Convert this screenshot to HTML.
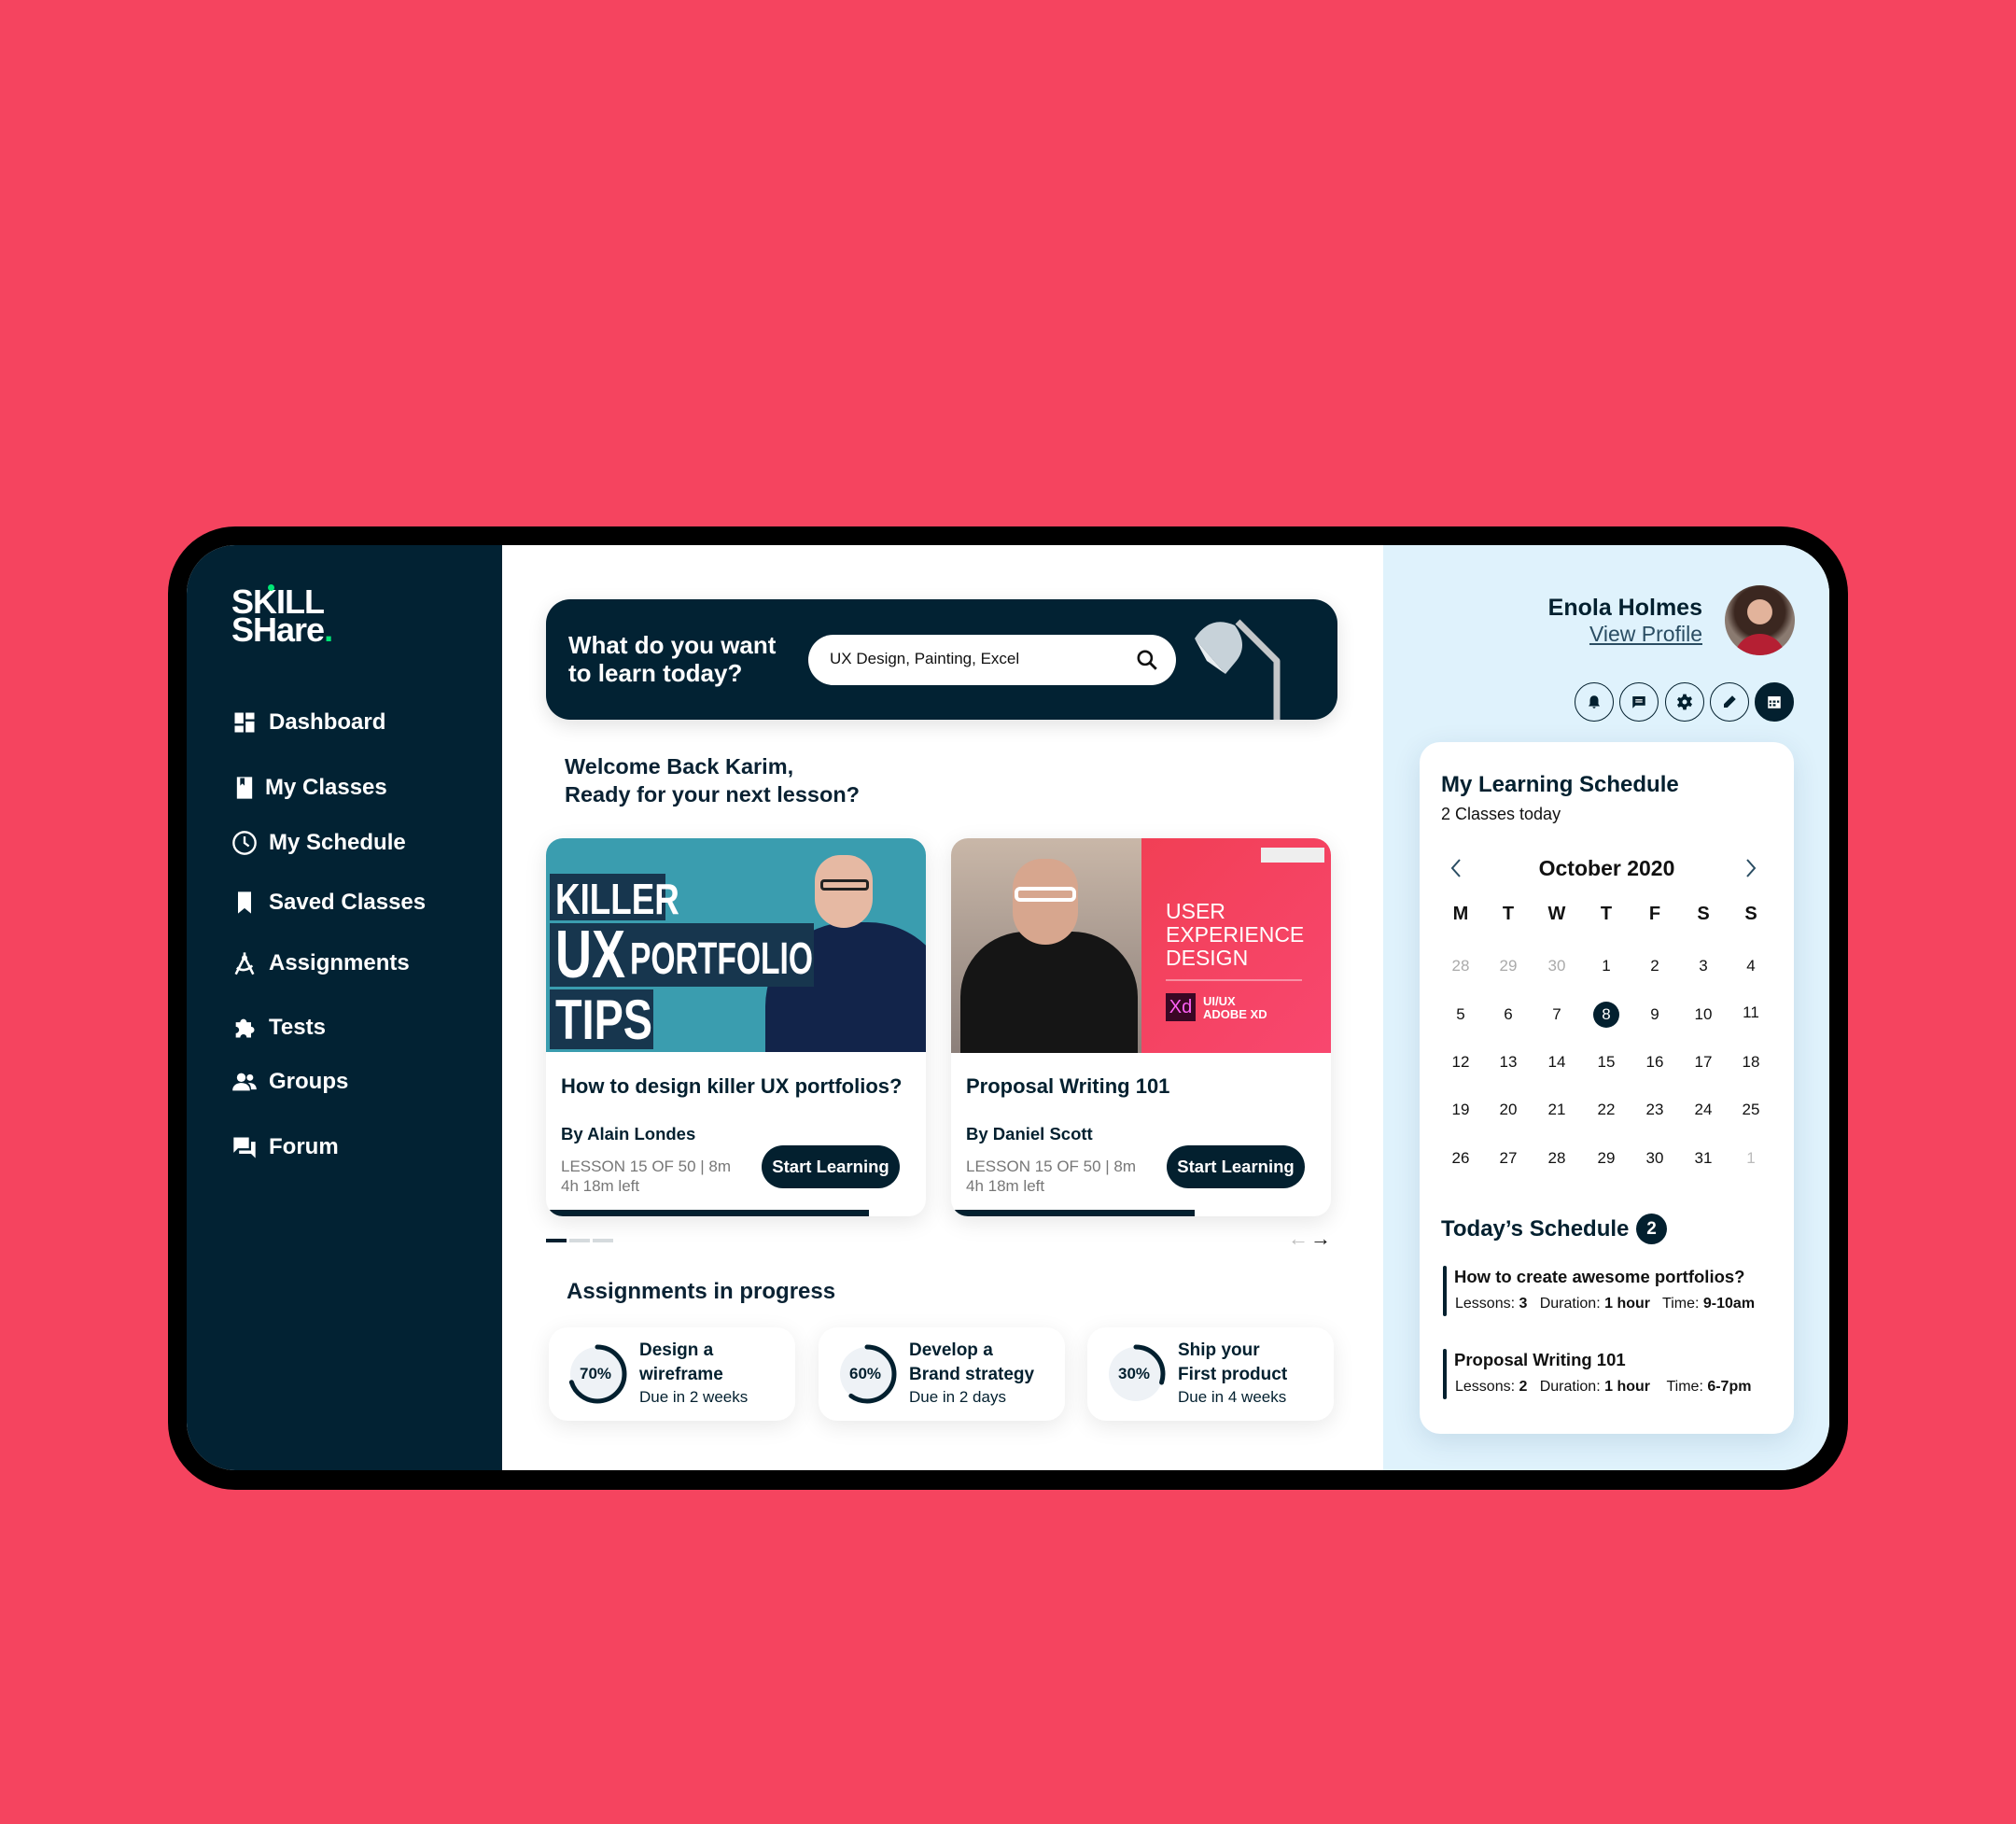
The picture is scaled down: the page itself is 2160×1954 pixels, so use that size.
<!DOCTYPE html>
<html><head><meta charset="utf-8">
<style>
*{margin:0;padding:0;box-sizing:border-box}
body{width:2160px;height:1954px;background:#F5445F;position:relative;overflow:hidden;font-family:"Liberation Sans",Arial,sans-serif;color:#03202F}
.a{position:absolute}
.frame{left:180px;top:564px;width:1800px;height:1032px;background:#000;border-radius:72px}
.screen{left:200px;top:584px;width:1760px;height:991px;border-radius:52px;overflow:hidden;background:#fff}
.side{left:0;top:0;width:338px;height:991px;background:#022233}
.right{left:1282px;top:0;width:478px;height:991px;background:#DFF2FC}
.nav{position:absolute;left:48px;color:#fff;font-size:24px;font-weight:bold;display:flex;align-items:center;gap:12px;white-space:nowrap}
.nav svg{width:28px;height:28px}
.t{position:absolute;white-space:nowrap}
.card{position:absolute;top:314px;width:407px;height:405px;background:#fff;border-radius:18px;overflow:hidden;box-shadow:0 6px 24px rgba(0,0,0,.10)}
.btn{position:absolute;left:231px;top:329px;width:148px;height:46px;border-radius:23px;background:#03202F;color:#fff;font-weight:bold;font-size:18.5px;line-height:46px;text-align:center}
.asg{position:absolute;top:838px;width:264px;height:100px;background:#fff;border-radius:20px;box-shadow:0 6px 24px rgba(0,0,0,.09)}
.ib{position:absolute;top:147px;width:42px;height:42px;border-radius:50%;border:1.5px solid #03202F;display:flex;align-items:center;justify-content:center}
.cal{position:absolute;width:40px;text-align:center;font-size:17px;transform:translateX(-20px)}
</style></head><body>
<div class="a frame"></div>
<div class="a screen">
  <div class="a side">
    <div class="t" style="left:48px;top:46px;color:#fff;font-size:36px;font-weight:900;line-height:30px;letter-spacing:-1px">SKILL<br>SHare<span style="color:#00E676">.</span></div>
    <div class="a" style="left:87px;top:42px;width:7px;height:7px;border-radius:50%;background:#00E676"></div>
    <div class="nav" style="top:176px"><svg viewBox="0 0 24 24"><path fill="#fff" d="M3 3h8v10H3zM13 3h8v6h-8zM13 11h8v10h-8zM3 15h8v6H3z"/></svg>Dashboard</div>
    <div class="nav" style="top:246px;gap:8px"><svg viewBox="0 0 24 24"><path fill="#fff" d="M5 2h14v20H5z"/><path fill="#022233" d="M8 3h4v7l-2-2-2 2z"/></svg>My Classes</div>
    <div class="nav" style="top:305px"><svg viewBox="0 0 24 24"><circle cx="12" cy="12" r="10" fill="none" stroke="#fff" stroke-width="2"/><path d="M12 6v6l4 3" fill="none" stroke="#fff" stroke-width="2"/></svg>My Schedule</div>
    <div class="nav" style="top:369px"><svg viewBox="0 0 24 24"><path fill="#fff" d="M6 2h12v20l-6-5-6 5z"/></svg>Saved Classes</div>
    <div class="nav" style="top:434px"><svg viewBox="0 0 24 24"><path d="M12 2v4M12 6l-8 16M12 6l8 16M5 16c4 3 10 3 14-2" fill="none" stroke="#fff" stroke-width="2.2"/><circle cx="12" cy="7" r="2.5" fill="#fff"/></svg>Assignments</div>
    <div class="nav" style="top:503px"><svg viewBox="0 0 24 24"><path fill="#fff" d="M4 7h4a3 3 0 1 1 6 0h4v4a3 3 0 1 1 0 6v4h-4a3 3 0 1 0-6 0H4v-4a3 3 0 1 0 0-6z"/></svg>Tests</div>
    <div class="nav" style="top:561px"><svg viewBox="0 0 24 24"><circle cx="9" cy="8" r="4" fill="#fff"/><circle cx="17" cy="8" r="3" fill="#fff"/><path fill="#fff" d="M1 20c0-5 4-7 8-7s8 2 8 7zM17 13c3 0 6 2 6 6h-5c0-3-1-5-3-6z"/></svg>Groups</div>
    <div class="nav" style="top:631px"><svg viewBox="0 0 24 24"><path fill="#fff" d="M2 3h14v10H6l-4 4z"/><path fill="#fff" d="M18 7h4v15l-4-4H7v-3h11z"/></svg>Forum</div>
  </div>

  <div class="a" style="left:385px;top:58px;width:848px;height:129px;background:#022233;border-radius:26px;box-shadow:0 6px 20px rgba(0,0,0,.12);overflow:hidden">
    <div class="t" style="left:24px;top:34px;color:#fff;font-size:26px;font-weight:bold;line-height:30px">What do you want<br>to learn today?</div>
    <div class="a" style="left:281px;top:38px;width:394px;height:54px;background:#fff;border-radius:27px">
      <div class="t" style="left:23px;top:16px;font-size:17px;color:#111">UX Design, Painting, Excel</div>
      <svg class="a" style="left:350px;top:14px" width="26" height="26" viewBox="0 0 24 24"><circle cx="10" cy="10" r="6.5" fill="none" stroke="#111" stroke-width="2.4"/><path d="M15 15l6 6" stroke="#111" stroke-width="2.6"/></svg>
    </div>
    <svg class="a" style="left:0;top:0" width="848" height="129" viewBox="0 0 848 129"><path d="M741 24 L783 66 L783 129" fill="none" stroke="#C4C7C9" stroke-width="7" stroke-linejoin="round"/><path d="M695 42 Q712 16 738 28 Q754 50 738 68 L728 80 Z" fill="#C7D2D9"/><path d="M695 42 L728 80 L708 66 Z" fill="#E8EDF0"/></svg>
  </div>

  <div class="t" style="left:405px;top:222px;font-size:23.5px;font-weight:bold;line-height:30px;color:#0A2233">Welcome Back Karim,<br>Ready for your next lesson?</div>

  <div class="card" style="left:385px">
    <div class="a" style="left:0;top:0;width:407px;height:229px;background:#3A9DAF;overflow:hidden">
      <div class="a" style="left:235px;top:90px;width:200px;height:160px;background:#12244A;border-radius:90px 90px 0 0"></div>
      <div class="a" style="left:288px;top:18px;width:62px;height:78px;background:#E6B9A3;border-radius:30px 30px 34px 34px"></div>
      <div class="a" style="left:294px;top:44px;width:52px;height:12px;border:3px solid #222;border-radius:4px"></div>
      <div class="a" style="left:4px;top:38px;width:124px;height:50px;background:#17364E"></div>
      <div class="a" style="left:4px;top:91px;width:283px;height:68px;background:#17364E"></div>
      <div class="a" style="left:4px;top:162px;width:111px;height:64px;background:#17364E"></div>
      <div class="t" style="left:10px;top:38px;color:#fff;font-size:46px;font-weight:bold;font-family:'Liberation Sans Narrow','Liberation Sans',sans-serif;transform:scaleX(.8);transform-origin:left">KILLER</div>
      <div class="t" style="left:10px;top:88px;color:#fff;font-size:72px;font-weight:bold;font-family:'Liberation Sans Narrow','Liberation Sans',sans-serif;transform:scaleX(.75);transform-origin:left;line-height:74px">UX</div>
      <div class="t" style="left:90px;top:102px;color:#fff;font-size:48px;font-weight:bold;font-family:'Liberation Sans Narrow','Liberation Sans',sans-serif;transform:scaleX(.7);transform-origin:left">PORTFOLIO</div>
      <div class="t" style="left:10px;top:160px;color:#fff;font-size:60px;font-weight:bold;font-family:'Liberation Sans Narrow','Liberation Sans',sans-serif;transform:scaleX(.78);transform-origin:left">TIPS</div>
    </div>
    <div class="t" style="left:16px;top:253px;font-size:22px;font-weight:bold">How to design killer UX portfolios?</div>
    <div class="t" style="left:16px;top:306px;font-size:18.5px;font-weight:bold">By Alain Londes</div>
    <div class="t" style="left:16px;top:341px;font-size:17px;color:#777;line-height:21px">LESSON 15 OF 50 | 8m<br>4h 18m left</div>
    <div class="btn">Start Learning</div>
    <div class="a" style="left:0;top:398px;width:346px;height:7px;background:#03202F"></div>
  </div>
  <div class="card" style="left:819px">
    <div class="a" style="left:0;top:0;width:204px;height:230px;background:linear-gradient(180deg,#C9B7A8,#8B7F7A)">
      <div class="a" style="left:10px;top:100px;width:190px;height:130px;background:#151515;border-radius:70px 70px 0 0"></div>
      <div class="a" style="left:66px;top:22px;width:70px;height:92px;background:#D7A68E;border-radius:34px 34px 38px 38px"></div>
      <div class="a" style="left:68px;top:52px;width:66px;height:16px;border:4px solid #fff;border-radius:6px"></div>
    </div>
    <div class="a" style="left:204px;top:0;width:203px;height:230px;background:linear-gradient(135deg,#F13F55,#F8476F)">
      <div class="t" style="left:26px;top:66px;color:#fff;font-size:23px;line-height:25px;font-family:'Liberation Sans Narrow','Liberation Sans',sans-serif">USER<br>EXPERIENCE<br>DESIGN</div>
      <div class="a" style="left:26px;top:151px;width:146px;height:2px;background:rgba(255,255,255,.4)"></div>
      <div class="a" style="left:26px;top:166px;width:32px;height:30px;background:#3A0724;color:#FF61F6;font-size:20px;text-align:center;line-height:30px">Xd</div>
      <div class="t" style="left:66px;top:168px;color:#fff;font-size:13px;font-weight:bold;line-height:14px">UI/UX<br>ADOBE XD</div>
      <div class="a" style="left:128px;top:10px;width:68px;height:16px;background:#eee"></div>
    </div>
    <div class="t" style="left:16px;top:253px;font-size:22px;font-weight:bold">Proposal Writing 101</div>
    <div class="t" style="left:16px;top:306px;font-size:18.5px;font-weight:bold">By Daniel Scott</div>
    <div class="t" style="left:16px;top:341px;font-size:17px;color:#777;line-height:21px">LESSON 15 OF 50 | 8m<br>4h 18m left</div>
    <div class="btn">Start Learning</div>
    <div class="a" style="left:0;top:398px;width:261px;height:7px;background:#03202F"></div>
  </div>
  <div class="a" style="left:385px;top:743px;width:22px;height:4px;background:#03202F"></div>
  <div class="a" style="left:410px;top:743px;width:22px;height:4px;background:#D5DADD"></div>
  <div class="a" style="left:435px;top:743px;width:22px;height:4px;background:#D5DADD"></div>
  <div class="t" style="left:1180px;top:730px;font-size:22px;color:#bbb">←</div>
  <div class="t" style="left:1204px;top:730px;font-size:22px;color:#111">→</div>

  <div class="t" style="left:407px;top:786px;font-size:24px;font-weight:bold;color:#0A2233">Assignments in progress</div>
  <div class="asg" style="left:388px"><svg class="a" style="left:20px;top:18px" width="64" height="64" viewBox="0 0 64 64"><circle cx="32" cy="32" r="29" fill="#EEF2F6"/><circle cx="32" cy="32" r="29" fill="none" stroke="#03202F" stroke-width="5" stroke-dasharray="127.5 182.2" transform="rotate(-90 32 32)" stroke-linecap="round"/></svg><div class="t" style="left:33px;top:40px;font-size:17px;font-weight:bold">70%</div><div class="t" style="left:97px;top:12px;font-size:19px;font-weight:bold;line-height:26px">Design a<br>wireframe</div><div class="t" style="left:97px;top:65px;font-size:17px">Due in 2 weeks</div></div>
  <div class="asg" style="left:677px"><svg class="a" style="left:20px;top:18px" width="64" height="64" viewBox="0 0 64 64"><circle cx="32" cy="32" r="29" fill="#EEF2F6"/><circle cx="32" cy="32" r="29" fill="none" stroke="#03202F" stroke-width="5" stroke-dasharray="109.3 182.2" transform="rotate(-90 32 32)" stroke-linecap="round"/></svg><div class="t" style="left:33px;top:40px;font-size:17px;font-weight:bold">60%</div><div class="t" style="left:97px;top:12px;font-size:19px;font-weight:bold;line-height:26px">Develop a<br>Brand strategy</div><div class="t" style="left:97px;top:65px;font-size:17px">Due in 2 days</div></div>
  <div class="asg" style="left:965px"><svg class="a" style="left:20px;top:18px" width="64" height="64" viewBox="0 0 64 64"><circle cx="32" cy="32" r="29" fill="#EEF2F6"/><circle cx="32" cy="32" r="29" fill="none" stroke="#03202F" stroke-width="5" stroke-dasharray="54.7 182.2" transform="rotate(-90 32 32)" stroke-linecap="round"/></svg><div class="t" style="left:33px;top:40px;font-size:17px;font-weight:bold">30%</div><div class="t" style="left:97px;top:12px;font-size:19px;font-weight:bold;line-height:26px">Ship your<br>First product</div><div class="t" style="left:97px;top:65px;font-size:17px">Due in 4 weeks</div></div>

  <div class="a right">
    <div class="t" style="right:136px;top:53px;font-size:25px;font-weight:bold;text-align:right">Enola Holmes</div>
    <div class="t" style="right:136px;top:82px;font-size:23px;text-decoration:underline;color:#2A4D63">View Profile</div>
    <div class="a" style="left:366px;top:43px;width:75px;height:75px;border-radius:50%;background:radial-gradient(circle at 50% 38%,#E2B39B 0 22%,#3B2720 23% 45%,#8A7A70 60%);overflow:hidden"><div class="a" style="left:10px;top:52px;width:55px;height:30px;background:#B51F33;border-radius:30px 30px 0 0"></div></div>
    <div class="ib" style="left:205px"><svg width="18" height="18" viewBox="0 0 24 24"><path fill="#03202F" d="M12 3c4 0 6 3 6 7v5l2 3H4l2-3v-5c0-4 2-7 6-7zM10 19h4a2 2 0 0 1-4 0z"/></svg></div>
    <div class="ib" style="left:253px"><svg width="18" height="18" viewBox="0 0 24 24"><path fill="#03202F" d="M3 4h18v13H7l-4 4z"/><path stroke="#fff" stroke-width="1.6" d="M7 9h10M7 12h10"/></svg></div>
    <div class="ib" style="left:302px"><svg width="20" height="20" viewBox="0 0 24 24"><path fill="#03202F" d="M10 2h4l.6 3 2.2 1.2 2.8-1.2 2 3.4-2.3 2v2.4l2.3 2-2 3.4-2.8-1.2-2.2 1.2L14 22h-4l-.6-3-2.2-1.2-2.8 1.2-2-3.4 2.3-2v-2.4l-2.3-2 2-3.4 2.8 1.2L9.4 5z"/><circle cx="12" cy="12" r="3" fill="#DFF2FC"/></svg></div>
    <div class="ib" style="left:350px"><svg width="18" height="18" viewBox="0 0 24 24"><path fill="#03202F" d="M16 3l5 5L9 20H4v-5z"/></svg></div>
    <div class="ib" style="left:398px;background:#03202F"><svg width="18" height="18" viewBox="0 0 24 24"><rect x="3" y="4" width="18" height="17" fill="#fff"/><path fill="#03202F" d="M5 10h3v3H5zM10 10h4v3h-4zM16 10h3v3h-3zM5 15h3v3H5zM10 15h4v3h-4z"/></svg></div>

    <div class="a" style="left:39px;top:211px;width:401px;height:741px;background:#fff;border-radius:22px;box-shadow:0 8px 30px rgba(0,60,100,.12)">
      <div class="t" style="left:23px;top:32px;font-size:24px;font-weight:bold">My Learning Schedule</div>
      <div class="t" style="left:23px;top:67px;font-size:18px;color:#111">2 Classes today</div>
      <svg class="a" style="left:32px;top:124px" width="14" height="22" viewBox="0 0 14 22"><path d="M11 2L3 11l8 9" fill="none" stroke="#2A4D63" stroke-width="2"/></svg>
      <svg class="a" style="left:348px;top:124px" width="14" height="22" viewBox="0 0 14 22"><path d="M3 2l8 9-8 9" fill="none" stroke="#2A4D63" stroke-width="2"/></svg>
      <div class="t" style="left:0;width:401px;text-align:center;top:122px;font-size:23px;font-weight:bold;color:#111">October 2020</div>
      <div style="position:absolute;left:0;top:0;font-weight:bold;font-size:20px;color:#111">
        <div class="cal" style="left:44px;top:173px;font-size:20px">M</div><div class="cal" style="left:95px;top:173px;font-size:20px">T</div><div class="cal" style="left:147px;top:173px;font-size:20px">W</div><div class="cal" style="left:200px;top:173px;font-size:20px">T</div><div class="cal" style="left:252px;top:173px;font-size:20px">F</div><div class="cal" style="left:304px;top:173px;font-size:20px">S</div><div class="cal" style="left:355px;top:173px;font-size:20px">S</div>
      </div>
      <div style="position:absolute;left:0;top:0;color:#111">
        <div class="cal" style="left:44px;top:230px;color:#aaa">28</div><div class="cal" style="left:95px;top:230px;color:#aaa">29</div><div class="cal" style="left:147px;top:230px;color:#aaa">30</div><div class="cal" style="left:200px;top:230px">1</div><div class="cal" style="left:252px;top:230px">2</div><div class="cal" style="left:304px;top:230px">3</div><div class="cal" style="left:355px;top:230px">4</div>
        <div class="cal" style="left:44px;top:282px">5</div><div class="cal" style="left:95px;top:282px">6</div><div class="cal" style="left:147px;top:282px">7</div><div class="a" style="left:186px;top:278px;width:28px;height:28px;border-radius:50%;background:#03202F"></div><div class="cal" style="left:200px;top:282px;color:#fff">8</div><div class="cal" style="left:252px;top:282px">9</div><div class="cal" style="left:304px;top:282px">10</div><div class="cal" style="left:355px;top:280px">11</div>
        <div class="cal" style="left:44px;top:333px">12</div><div class="cal" style="left:95px;top:333px">13</div><div class="cal" style="left:147px;top:333px">14</div><div class="cal" style="left:200px;top:333px">15</div><div class="cal" style="left:252px;top:333px">16</div><div class="cal" style="left:304px;top:333px">17</div><div class="cal" style="left:355px;top:333px">18</div>
        <div class="cal" style="left:44px;top:384px">19</div><div class="cal" style="left:95px;top:384px">20</div><div class="cal" style="left:147px;top:384px">21</div><div class="cal" style="left:200px;top:384px">22</div><div class="cal" style="left:252px;top:384px">23</div><div class="cal" style="left:304px;top:384px">24</div><div class="cal" style="left:355px;top:384px">25</div>
        <div class="cal" style="left:44px;top:436px">26</div><div class="cal" style="left:95px;top:436px">27</div><div class="cal" style="left:147px;top:436px">28</div><div class="cal" style="left:200px;top:436px">29</div><div class="cal" style="left:252px;top:436px">30</div><div class="cal" style="left:304px;top:436px">31</div><div class="cal" style="left:355px;top:436px;color:#bbb">1</div>
      </div>
      <div class="t" style="left:23px;top:508px;font-size:24px;font-weight:bold">Today’s Schedule</div>
      <div class="a" style="left:232px;top:505px;width:33px;height:33px;border-radius:50%;background:#03202F;color:#fff;font-weight:bold;font-size:19px;text-align:center;line-height:33px">2</div>
      <div class="a" style="left:25px;top:561px;width:4px;height:54px;background:#03202F;border-radius:2px"></div>
      <div class="t" style="left:37px;top:562px;font-size:18.5px;font-weight:bold;color:#111">How to create awesome portfolios?</div>
      <div class="t" style="left:38px;top:593px;font-size:16px;color:#111">Lessons: <b>3</b>&nbsp;&nbsp; Duration: <b>1 hour</b>&nbsp;&nbsp; Time: <b>9-10am</b></div>
      <div class="a" style="left:25px;top:650px;width:4px;height:54px;background:#03202F;border-radius:2px"></div>
      <div class="t" style="left:37px;top:651px;font-size:18.5px;font-weight:bold;color:#111">Proposal Writing 101</div>
      <div class="t" style="left:38px;top:682px;font-size:16px;color:#111">Lessons: <b>2</b>&nbsp;&nbsp; Duration: <b>1 hour</b>&nbsp;&nbsp;&nbsp; Time: <b>6-7pm</b></div>
    </div>
  </div>
</div>
</body></html>
